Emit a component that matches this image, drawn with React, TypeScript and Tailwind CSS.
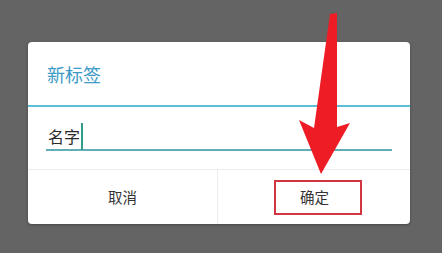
import React from "react";

export default function App() {
  return (
    <div
      className="relative w-[442px] h-[253px] bg-[#646464] overflow-hidden pt-[42px] pl-[28px]"
      style={{ fontFamily: '"Noto Sans CJK SC", "Noto Sans", sans-serif' }}
    >
      <div className="w-[382px] h-[182px] bg-white rounded-[4px] flex flex-col shadow-[0_1px_3px_rgba(0,0,0,0.3)]">
        <div className="h-[63px] flex items-center pl-[19px]">
          <span className="text-[18px] leading-none text-[#3d9ac6]">新标签</span>
        </div>
        <div className="h-[2px] bg-[#5dbfd6]" />
        <div className="h-[62px] pt-[16px] px-[18px]">
          <div className="h-[28px] flex items-center border-b-[2px] border-[#62aeb4] pl-[2px]">
            <span className="text-[16px] leading-none text-[#2a2a2a]">名字</span>
            <span className="w-[2px] h-[27px] bg-[#2f9c8e] ml-[1px] mt-[1px]" />
          </div>
        </div>
        <div className="flex-1 flex border-t border-[#ececec]">
          <div className="w-[190px] flex items-center justify-center border-r border-[#ececec]">
            <span className="text-[14.5px] leading-none text-[#333]">取消</span>
          </div>
          <div className="flex-1 flex items-center pl-[56px]">
            <div className="w-[88px] h-[35px] border-[2px] border-[#d23440] flex items-center pl-[24px]">
              <span className="text-[14.5px] leading-none text-[#333]">确定</span>
            </div>
          </div>
        </div>
      </div>
      <svg className="absolute left-0 top-0" width="442" height="253" viewBox="0 0 442 253">
        <polygon
          points="330,14 337,13 337,127 350,123 321,174 299,120 314,128"
          fill="#ee1c25"
        />
      </svg>
    </div>
  );
}
